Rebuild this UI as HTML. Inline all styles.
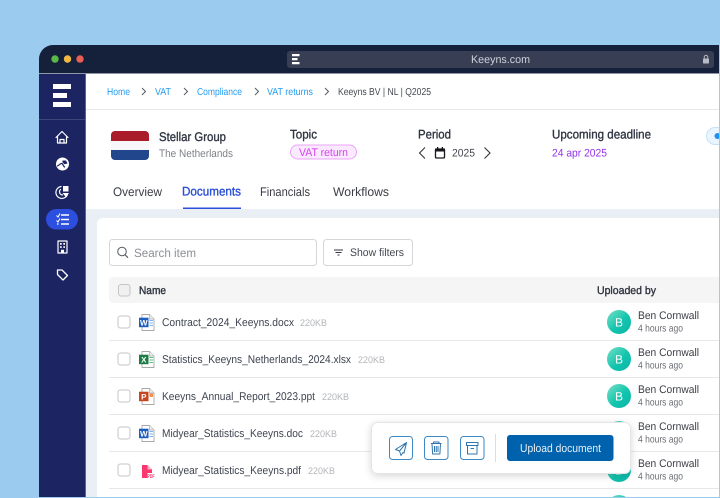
<!DOCTYPE html>
<html><head><meta charset="utf-8"><style>
html,body{margin:0;padding:0;width:720px;height:498px;overflow:hidden;background:#9bcbee}
svg{display:block}
text{font-family:"Liberation Sans",sans-serif;text-rendering:geometricPrecision}
.s{stroke-width:.35px}
</style></head><body>
<svg width="720" height="498" viewBox="0 0 720 498" xmlns="http://www.w3.org/2000/svg">
<defs>
<linearGradient id="av" x1="0" y1="0" x2="1" y2="1"><stop offset="0" stop-color="#7be0c6"/><stop offset=".55" stop-color="#12c4ae"/><stop offset="1" stop-color="#0bb5a8"/></linearGradient>
<filter id="sh" x="-10%" y="-30%" width="120%" height="170%"><feDropShadow dx="0" dy="2" stdDeviation="4" flood-color="#000" flood-opacity=".16"/></filter>
<g id="doc"><path d="M3 .5H10.500L15 5V16.500H3Z" fill="#fff" stroke="#a8a8a8" stroke-width=".9"/><path d="M10.500 .5V5H15" fill="#eee" stroke="#a8a8a8" stroke-width=".7"/></g>
<g id="word"><use href="#doc"/><rect x="0" y="3.700" width="9.500" height="9.500" fill="#1d5fc0"/><text x="4.750" y="11.500" font-size="8" font-weight="700" fill="#fff" text-anchor="middle">W</text><path d="M10.500 6.500h3.500M10.500 9h3.500M10.500 11.500h3.500" stroke="#7fb2e8" stroke-width="1"/></g>
<g id="excel"><use href="#doc"/><rect x="0" y="3.700" width="9.500" height="9.500" fill="#1c7a45"/><text x="4.750" y="11.500" font-size="8" font-weight="700" fill="#fff" text-anchor="middle">X</text><path d="M10.500 6.500h3.500M10.500 9h3.500M10.500 11.500h3.500" stroke="#5cb884" stroke-width="1"/></g>
<g id="ppt"><use href="#doc"/><rect x="0" y="3.700" width="9.500" height="9.500" fill="#c8431f"/><text x="4.750" y="11.500" font-size="8" font-weight="700" fill="#fff" text-anchor="middle">P</text><path d="M10.500 5.500h3.500v3.500h-3.500z" fill="#f0904a"/></g>
<g id="chk"><rect x="0" y="0" width="12" height="12" rx="2.500" fill="#fff" stroke="#c4c4c4" stroke-width="1"/></g>
<g id="upl"><circle cx="0" cy="0" r="12" fill="url(#av)"/><text x="0" y="4.500" font-size="12" fill="#fff" text-anchor="middle">B</text>
<text x="19" y="-3" font-size="11" fill="#3a3d45" textLength="61" lengthAdjust="spacingAndGlyphs">Ben Cornwall</text>
<text x="19" y="9.500" font-size="10" fill="#6a6d73" textLength="45" lengthAdjust="spacingAndGlyphs">4 hours ago</text></g>
</defs>

<rect width="720" height="498" fill="#9bcbee"/>
<!-- window -->
<path d="M39 497V59a14 14 0 0 1 14-14H720V73H86V497Z" fill="#15213b"/>
<rect x="39" y="73" width="47" height="424" fill="#1c2461"/>
<rect x="39" y="73" width="680" height="1" fill="#8f97a8"/>
<rect x="86" y="74" width="633" height="423" fill="#fff"/>
<rect x="85" y="74" width="1" height="423" fill="#5c6390"/>
<circle cx="55" cy="59" r="3.700" fill="#5ab947"/><circle cx="67.500" cy="59" r="3.700" fill="#f4b740"/><circle cx="80" cy="59" r="3.700" fill="#ea5f55"/>
<rect x="287" y="51" width="427" height="17" rx="3" fill="#383f55"/>
<path d="M292 54h7.500v2.200h-7.500zM292 58h5.500v2.200h-5.500zM292 62h7.500v2.200h-7.500z" fill="#fff"/>
<text x="471" y="63" font-size="11" fill="#cfd2da" textLength="59" lengthAdjust="spacingAndGlyphs">Keeyns.com</text>
<rect x="703" y="58.500" width="6" height="5" rx=".8" fill="#b9bcc6"/><path d="M704.200 58.500v-1.300a1.800 1.800 0 0 1 3.600 0v1.300" fill="none" stroke="#b9bcc6" stroke-width="1"/>

<!-- sidebar -->
<path d="M53 84h18v5H53zM53 93h14v5H53zM53 102h18v5H53z" fill="#fff"/>
<rect x="39" y="119" width="46" height="1" fill="#3e4579"/>
<g fill="none" stroke="#fff" stroke-width="1.200" stroke-linejoin="round" stroke-linecap="round">
<path d="M56 137.500 62 131.500 68 137.500M57.500 136.500V143H66.500V136.500M60 143V139.500H64V143"/>
<path d="M61 186.500a6 6 0 1 0 6.500 8"/><path d="M60.500 189.500a3.200 3.200 0 0 0 2 5.500"/>
<path d="M55 218h1l1-1.500 1.200 1.800M55 223.500h1l1-1.500 1.200 1.800"/>
<rect x="58" y="241" width="9" height="12"/>
<path d="M57.500 270h4.500l5.500 5.500-4.500 4.500-5.500-5.500Z" stroke-width="1.300"/>
</g>
<circle cx="62.500" cy="164" r="6.500" fill="#fff"/>
<path d="M62.500 160.500h3.500l1.500 3-3 .8-2-1.800z" fill="#1c2461"/>
<path d="M57 166c2 0 2.500-2.500 4.500-2.500s1.500 3.500 3.500 3.500" fill="none" stroke="#1c2461" stroke-width="1.200"/>
<path d="M63 186h5.500v5.500H63zM62.500 193h6.500l-3.200 4z" fill="#fff"/>
<rect x="46" y="209" width="32" height="20.500" rx="10.250" fill="#2d4fe0"/>
<g fill="none" stroke="#fff"><path d="M56.500 215.500 58 217 60 213.500M56.500 220.500 58 222 60 218.500" stroke-width="1"/><path d="M61 215h8M61 219.500h8M61 224h8" stroke-width="1.400"/><path d="M57 224h1.500" stroke-width="1.400"/></g>
<path d="M60 243h1.700v1.700H60zM63.300 243H65v1.700h-1.700zM60 246.200h1.700v1.700H60zM63.300 246.200H65v1.700h-1.700zM61 253v-3.300h3v3.300z" fill="#fff"/>

<!-- breadcrumb -->
<g font-size="10" fill="#1f9bf0">
<text x="107" y="95" textLength="23" lengthAdjust="spacingAndGlyphs">Home</text>
<text x="155" y="95" textLength="16" lengthAdjust="spacingAndGlyphs">VAT</text>
<text x="197" y="95" textLength="45" lengthAdjust="spacingAndGlyphs">Compliance</text>
<text x="267" y="95" textLength="46" lengthAdjust="spacingAndGlyphs">VAT returns</text>
</g>
<text x="338" y="95" font-size="10" fill="#44474f" textLength="93" lengthAdjust="spacingAndGlyphs">Keeyns BV | NL | Q2025</text>
<g fill="none" stroke="#555a63" stroke-width="1"><path d="M142 88l3.500 3.500-3.500 3.500M184 88l3.500 3.500-3.500 3.500M255 88l3.500 3.500-3.500 3.500M325 88l3.500 3.500-3.500 3.500"/></g>
<rect x="86" y="109" width="633" height="1" fill="#e6e8ea"/>

<!-- header -->
<path d="M111 135a4 4 0 0 1 4-4h30a4 4 0 0 1 4 4v6H111Z" fill="#ab1c2a"/>
<rect x="111" y="141" width="38" height="9" fill="#f7f7f9"/>
<path d="M111 150h38v6a4 4 0 0 1-4 4H115a4 4 0 0 1-4-4Z" fill="#21468b"/>
<text x="159" y="141" font-size="12.500" fill="#2f3442" stroke="#2f3442" class="s" textLength="67" lengthAdjust="spacingAndGlyphs">Stellar Group</text>
<text x="159" y="157" font-size="11" fill="#7d8086" textLength="74" lengthAdjust="spacingAndGlyphs">The Netherlands</text>
<text x="290" y="138.500" font-size="12.500" fill="#2f3442" stroke="#2f3442" class="s" textLength="27" lengthAdjust="spacingAndGlyphs">Topic</text>
<rect x="290.500" y="145" width="66" height="14" rx="7" fill="#fbe9ff" stroke="#e9a5f5"/>
<text x="299" y="156" font-size="11" fill="#d63ff0" textLength="49" lengthAdjust="spacingAndGlyphs">VAT return</text>
<text x="418" y="138.500" font-size="12.500" fill="#2f3442" stroke="#2f3442" class="s" textLength="33" lengthAdjust="spacingAndGlyphs">Period</text>
<path d="M425 147.500l-5.500 5.500 5.500 5.500M484.500 147.500l5.500 5.500-5.500 5.500" fill="none" stroke="#33363d" stroke-width="1.100"/>
<rect x="435.500" y="149" width="9" height="9" rx="1" fill="#fff" stroke="#15171c" stroke-width="1.300"/><path d="M435 148.500h10v3h-10zM437 147h1.300v2h-1.300zM441.700 147h1.300v2h-1.300z" fill="#15171c"/>
<text x="452" y="156.500" font-size="11" fill="#44474f" textLength="23" lengthAdjust="spacingAndGlyphs">2025</text>
<text x="552" y="138.500" font-size="12.500" fill="#2f3442" stroke="#2f3442" class="s" textLength="99" lengthAdjust="spacingAndGlyphs">Upcoming deadline</text>
<text x="552" y="156.500" font-size="11" fill="#9333ea" textLength="55" lengthAdjust="spacingAndGlyphs">24 apr 2025</text>
<rect x="706.500" y="127.500" width="20" height="17" rx="8.500" fill="#eaf4ff" stroke="#c6e0f8"/><circle cx="717.500" cy="136" r="3" fill="#1e90f5"/>

<!-- tabs -->
<text x="113" y="196" font-size="12.500" fill="#3a3d45" textLength="49" lengthAdjust="spacingAndGlyphs">Overview</text>
<text x="182" y="195.500" font-size="12.500" fill="#2a4fd8" stroke="#2a4fd8" class="s" textLength="59" lengthAdjust="spacingAndGlyphs">Documents</text>
<text x="260" y="196" font-size="12.500" fill="#3a3d45" textLength="50" lengthAdjust="spacingAndGlyphs">Financials</text>
<text x="333" y="196" font-size="12.500" fill="#3a3d45" textLength="56" lengthAdjust="spacingAndGlyphs">Workflows</text>
<rect x="183" y="207.500" width="58" height="1.500" fill="#2a4fd8"/>

<!-- content -->
<rect x="86" y="209" width="633" height="288" fill="#e9eff5"/>
<path d="M719 218H103a6 6 0 0 0-6 6V497H719Z" fill="#fff"/>
<rect x="109.500" y="239.500" width="207" height="26" rx="3" fill="#fff" stroke="#d5d6d9"/>
<circle cx="122" cy="251.500" r="4.300" fill="none" stroke="#555a63" stroke-width="1"/><path d="M125 254.700l3 3" stroke="#555a63" stroke-width="1.100"/>
<text x="134" y="257" font-size="12" fill="#8d9096" textLength="62" lengthAdjust="spacingAndGlyphs">Search item</text>
<rect x="323.500" y="239.500" width="89" height="26" rx="3" fill="#fff" stroke="#d5d6d9"/>
<path d="M334 250h9M335.500 252.500h6M337.500 255h2" stroke="#33363d" stroke-width="1"/>
<text x="350" y="256" font-size="11" fill="#44474f" textLength="54" lengthAdjust="spacingAndGlyphs">Show filters</text>
<path d="M719 277H113a4 4 0 0 0-4 4v18a4 4 0 0 0 4 4H719Z" fill="#f5f5f5"/>
<rect x="118.500" y="284.500" width="11.500" height="11.500" rx="2.500" fill="#f0f0f0" stroke="#c4c4c4"/>
<text x="139" y="294" font-size="11" fill="#2f3442" stroke="#2f3442" stroke-width=".4" textLength="27" lengthAdjust="spacingAndGlyphs">Name</text>
<text x="597" y="294" font-size="11" fill="#2f3442" stroke="#2f3442" stroke-width=".35" textLength="59" lengthAdjust="spacingAndGlyphs">Uploaded by</text>

<!-- rows -->
<g fill="#e6e7e9"><rect x="109" y="340" width="610" height="1"/><rect x="109" y="377" width="610" height="1"/><rect x="109" y="414" width="610" height="1"/><rect x="109" y="451" width="610" height="1"/><rect x="109" y="488" width="610" height="1"/></g>
<use href="#chk" x="118" y="316"/><use href="#chk" x="118" y="353"/><use href="#chk" x="118" y="390"/><use href="#chk" x="118" y="427"/><use href="#chk" x="118" y="464"/>
<use href="#word" x="139" y="314"/><use href="#excel" x="139" y="351"/><use href="#ppt" x="139" y="388"/><use href="#word" x="139" y="425"/>
<path d="M142 465H147.500L152 469.500V473H147.500V478H142Z" fill="#f8386f"/><path d="M147.500 465V469.500H152Z" fill="#fcb0c6"/>
<text x="147.500" y="478" font-size="5.500" font-weight="700" fill="#f8386f" textLength="7" lengthAdjust="spacingAndGlyphs">PDF</text>
<g font-size="11.200" fill="#3f4450">
<text x="162" y="326" textLength="132" lengthAdjust="spacingAndGlyphs">Contract_2024_Keeyns.docx</text>
<text x="162" y="363" textLength="189" lengthAdjust="spacingAndGlyphs">Statistics_Keeyns_Netherlands_2024.xlsx</text>
<text x="162" y="400" textLength="153" lengthAdjust="spacingAndGlyphs">Keeyns_Annual_Report_2023.ppt</text>
<text x="162" y="437" textLength="141" lengthAdjust="spacingAndGlyphs">Midyear_Statistics_Keeyns.doc</text>
<text x="162" y="474" textLength="139" lengthAdjust="spacingAndGlyphs">Midyear_Statistics_Keeyns.pdf</text>
</g>
<g font-size="9.500" fill="#b4b6ba">
<text x="300" y="326" textLength="27" lengthAdjust="spacingAndGlyphs">220KB</text>
<text x="358" y="363" textLength="27" lengthAdjust="spacingAndGlyphs">220KB</text>
<text x="322" y="400" textLength="27" lengthAdjust="spacingAndGlyphs">220KB</text>
<text x="310" y="437" textLength="27" lengthAdjust="spacingAndGlyphs">220KB</text>
<text x="308" y="474" textLength="27" lengthAdjust="spacingAndGlyphs">220KB</text>
</g>
<use href="#upl" x="619" y="322"/><use href="#upl" x="619" y="359"/><use href="#upl" x="619" y="396"/><use href="#upl" x="619" y="433"/><use href="#upl" x="619" y="470"/>
<circle cx="619" cy="507" r="12" fill="url(#av)"/>

<!-- floating panel -->
<rect x="371.500" y="422.500" width="259" height="51" rx="6" fill="#fff" stroke="#e4e5e7" filter="url(#sh)"/>
<g fill="none" stroke="#3d8ac6" stroke-width="1">
<rect x="389.500" y="436.500" width="23" height="23" rx="3"/>
<rect x="424.500" y="436.500" width="23.500" height="23" rx="3"/>
<rect x="460.500" y="436.500" width="23.500" height="23" rx="3"/>
</g>
<g fill="none" stroke="#2f74ad" stroke-width="1" stroke-linejoin="round">
<path d="M406.500 442.500 395.500 449.500 399.500 451 401 455.500 403 452.500 404 453ZM399.500 451 406.500 442.500"/>
<path d="M431 443.500h10.500M433.500 443.500v-1.500h5.500v1.500M432 443.500l.6 10.500h7.300l.6-10.500M434.500 446v6M436.250 446v6M438 446v6"/>
<path d="M466.500 442.500h11.500v3h-11.500zM467.500 445.500v8.500h9.500v-8.500M470.500 448.500h3.500"/>
</g>
<rect x="495" y="434" width="1" height="28" fill="#dcdde0"/>
<rect x="507" y="435" width="106.500" height="26" rx="3" fill="#0062ad"/>
<text x="520" y="452" font-size="11.500" fill="#e6f0f8" textLength="81" lengthAdjust="spacingAndGlyphs">Upload document</text>
<rect x="719" y="0" width="1" height="498" fill="#9bcbee"/>
<rect x="0" y="497" width="720" height="1" fill="#9bcbee"/>
</svg>
</body></html>
